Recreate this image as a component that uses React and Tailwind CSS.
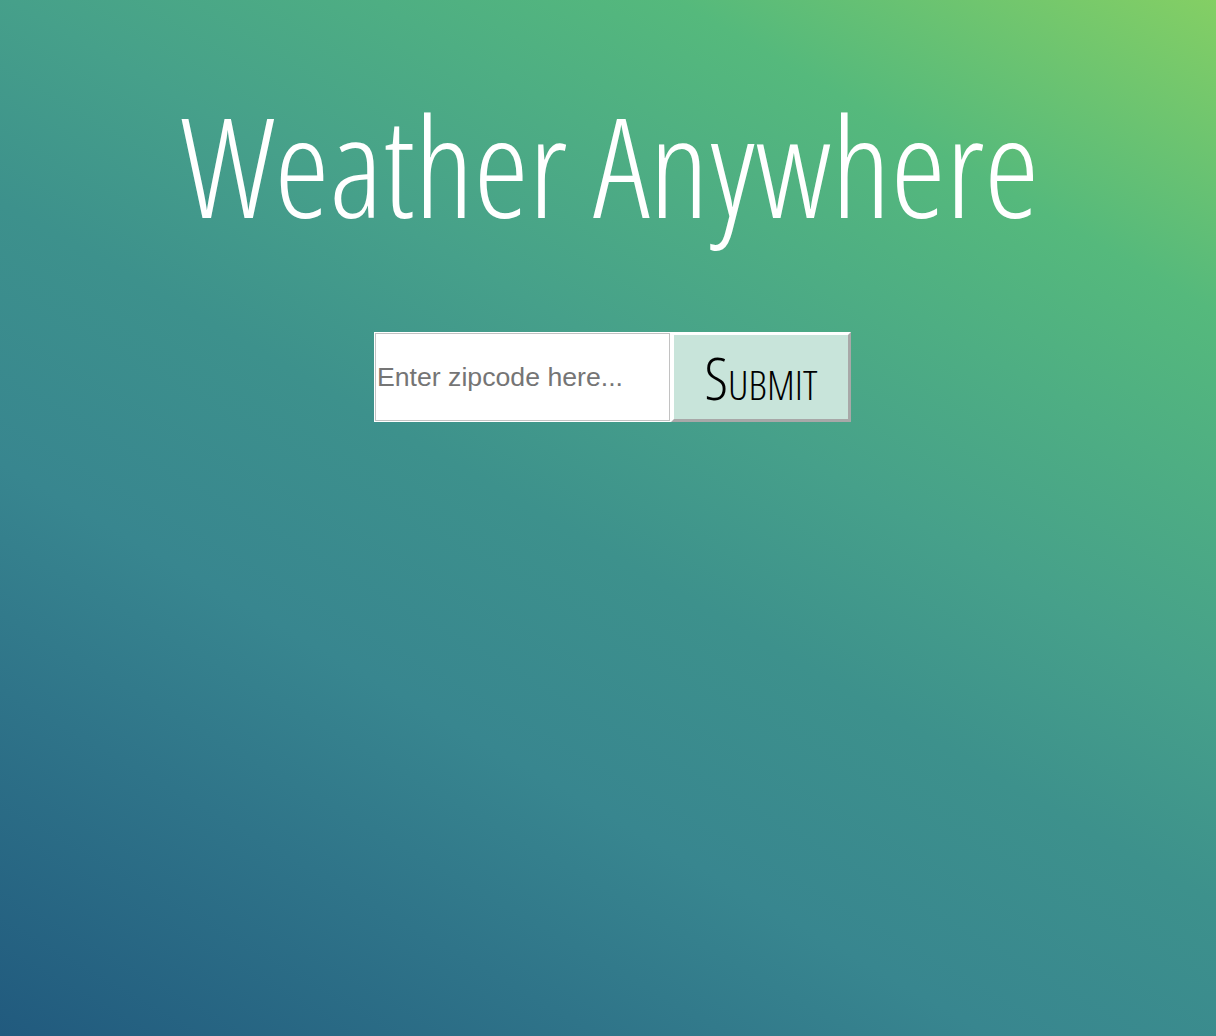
export default function App() {
  return (
    <div className="min-h-[1036px] w-full bg-[linear-gradient(30deg,#215a7e_0%,#2f7489_20%,#38868f_33%,#3d918c_48%,#46a08a_60%,#4eae83_72%,#55b97c_82%,#84cf64_100%)] flex flex-col items-center">
      <h1
        className="text-white text-[139px] leading-none mt-[95px] font-light [font-stretch:75%] whitespace-nowrap ml-[4px]"
        style={{ fontFamily: '"Open Sans", sans-serif' }}
      >
        Weather Anywhere
      </h1>
      <form className="flex mt-[98px] ml-[9px]" onSubmit={(e) => e.preventDefault()}>
        <div className="border border-white">
          <input
            type="text"
            placeholder="Enter zipcode here..."
            className="w-[295px] h-[88px] border border-[#c2c2c2] bg-white px-[1px] text-[26.67px] text-black placeholder:text-[#757575] outline-none"
            style={{ fontFamily: '"Liberation Sans", Arial, sans-serif' }}
          />
        </div>
        <button
          type="submit"
          className="w-[180px] h-[90px] bg-[#c8e4da] border-[3px] border-t-white border-l-white border-b-[#a8a8a8] border-r-[#a8a8a8] text-black text-[59px] leading-none font-light [font-stretch:75%] [font-variant:small-caps]"
          style={{ fontFamily: '"Open Sans", sans-serif' }}
        >
          Submit
        </button>
      </form>
    </div>
  );
}
